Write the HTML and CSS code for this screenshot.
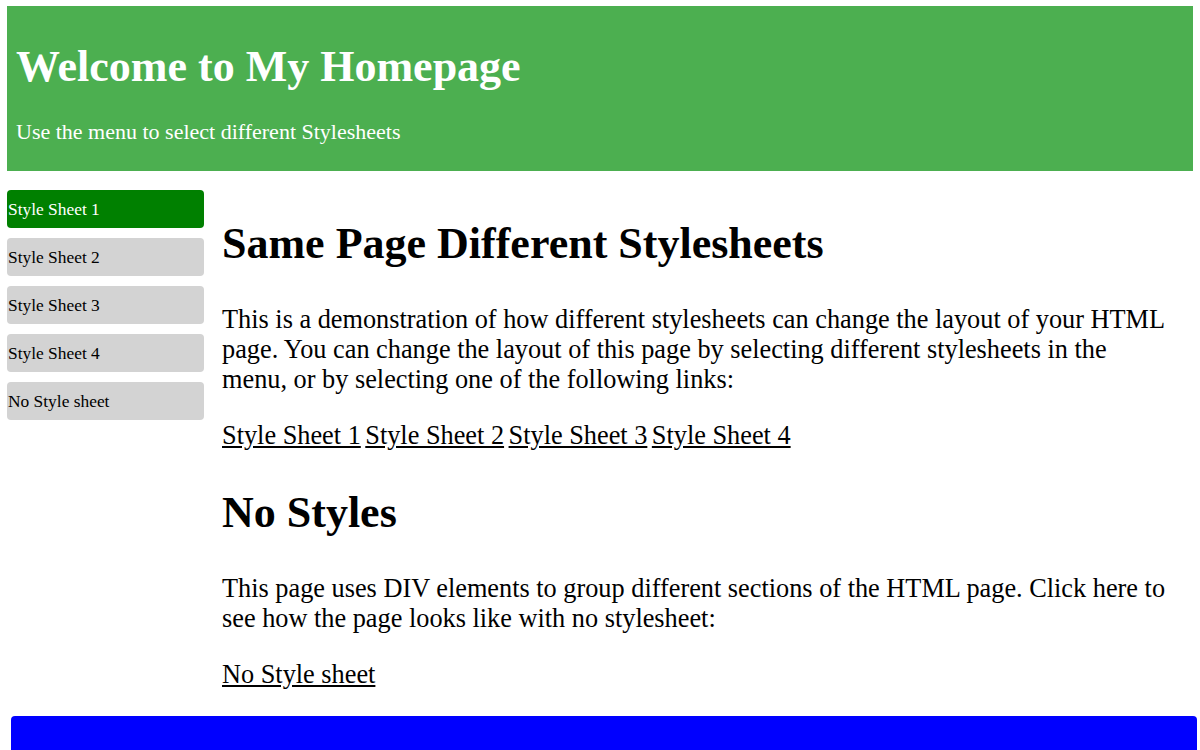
FILE: index.html
```html
<!DOCTYPE html>
<html>
<head>
<meta charset="utf-8">
<title>Same Page Different Stylesheets</title>
<link rel="stylesheet" href="styles.css">
</head>
<body>
<div class="header">
  <h1 class="header-title">Welcome to My Homepage</h1>
  <p class="header-sub">Use the menu to select different Stylesheets</p>
</div>
<div class="main">
  <div class="menu">
    <a class="menu-item active" href="#">Style Sheet 1</a>
    <a class="menu-item" href="#">Style Sheet 2</a>
    <a class="menu-item" href="#">Style Sheet 3</a>
    <a class="menu-item" href="#">Style Sheet 4</a>
    <a class="menu-item" href="#">No Style sheet</a>
  </div>
  <div class="content">
    <h2 class="content-title">Same Page Different Stylesheets</h2>
    <p class="text">This is a demonstration of how different stylesheets can change the layout of your HTML page. You can change the layout of this page by selecting different stylesheets in the menu, or by selecting one of the following links:</p>
    <p class="text links"><a class="link" href="#">Style Sheet 1</a> <a class="link" href="#">Style Sheet 2</a> <a class="link" href="#">Style Sheet 3</a> <a class="link" href="#">Style Sheet 4</a></p>
    <h2 class="content-title">No Styles</h2>
    <p class="text">This page uses DIV elements to group different sections of the HTML page. Click here to see how the page looks like with no stylesheet:</p>
    <p class="text"><a class="link" href="#">No Style sheet</a></p>
  </div>
</div>
<div class="footer"></div>
</body>
</html>
```
FILE: styles.css
```css
html, body {
  margin: 0;
  padding: 0;
  background: #ffffff;
}

body {
  font-family: "Liberation Serif", "Times New Roman", serif;
  color: #000000;
  padding-top: 6px;
}

.header {
  margin: 0 7px;
  background: #4caf50;
  color: #ffffff;
  padding: 36px 9px 26px;
  height: 103px;
}

.header-title {
  margin: 0;
  font-size: 44px;
  line-height: 50px;
  font-weight: bold;
}

.header-sub {
  margin: 28px 0 0;
  font-size: 22px;
  line-height: 24px;
}

.main {
  display: flex;
  align-items: flex-start;
  margin-top: 19px;
}

.menu {
  display: flex;
  flex-direction: column;
  gap: 10px;
  width: 197px;
  margin-left: 7px;
  flex-shrink: 0;
}

.menu-item {
  display: block;
  height: 38px;
  line-height: 39px;
  padding-left: 1px;
  background: #d3d3d3;
  color: #000000;
  border-radius: 4px;
  font-size: 17.4px;
  text-decoration: none;
}

.menu-item.active {
  background: #008000;
  color: #ffffff;
}

.content {
  margin-left: 18px;
  margin-top: -8px;
  padding-right: 25px;
  flex: 1;
}

.content-title {
  font-size: 44px;
  font-weight: bold;
  margin: 36px 0;
}

.text {
  font-size: 26.3px;
  line-height: 30px;
  margin: 26px 0;
}

.links {
  display: flex;
  flex-wrap: wrap;
  gap: 0 4.5px;
}

.link {
  color: #000000;
  text-decoration: underline;
}

.footer {
  margin: 0 3px 0 11px;
  height: 60px;
  background: #0000ff;
  border-radius: 4px 4px 0 0;
}
```
